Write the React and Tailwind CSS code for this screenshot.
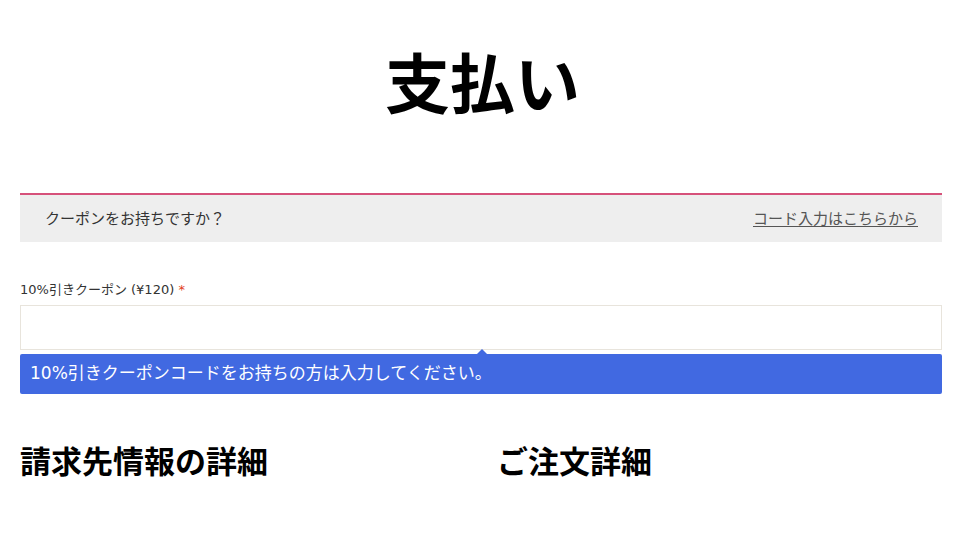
import React from "react";

const font = { fontFamily: '"Noto Sans CJK JP", "Noto Sans", sans-serif' };
const latinWide = { fontFamily: '"DejaVu Sans", "Noto Sans CJK JP", sans-serif' };

const App = () => {
  return (
    <div className="bg-white w-[960px] h-[540px] overflow-hidden" style={font}>
      <h1 className="text-center text-[65px] font-bold text-black leading-none pt-[48px] pb-[80px] pl-[5px]">
        支払い
      </h1>
      <div className="pl-5 pr-[18px]">
        <div className="border-t-2 border-[#d6517a] bg-[#eeeeee] h-[49px] flex items-center justify-between pl-[25px] pr-6">
          <p className="text-[15px] text-[#333]">クーポンをお持ちですか？</p>
          <a className="text-[15px] text-[#555] underline underline-offset-2">コード入力はこちらから</a>
        </div>

        <div className="mt-[38px]">
          <label className="block text-[13px] text-[#333] mb-[5px]" style={latinWide}>
            10%引きクーポン (¥120) <span className="text-[#e2401c]">*</span>
          </label>
          <div className="border border-[#e8e4dc] h-[45px] bg-white"></div>
          <div className="relative mt-[4px] bg-[#4169e1] rounded-[2px] h-[40px] flex items-center px-[10px]">
            <span className="absolute -top-[5px] left-[457px] w-0 h-0 border-l-[5px] border-r-[5px] border-b-[5px] border-l-transparent border-r-transparent border-b-[#4169e1]"></span>
            <p className="text-[17px] text-white" style={latinWide}>10%引きクーポンコードをお持ちの方は入力してください。</p>
          </div>
        </div>

        <div className="grid grid-cols-2 gap-8 mt-[50px]">
          <h3 className="text-[31px] font-bold text-black leading-none">請求先情報の詳細</h3>
          <h3 className="text-[31px] font-bold text-black leading-none">ご注文詳細</h3>
        </div>
      </div>
    </div>
  );
};

export default App;
